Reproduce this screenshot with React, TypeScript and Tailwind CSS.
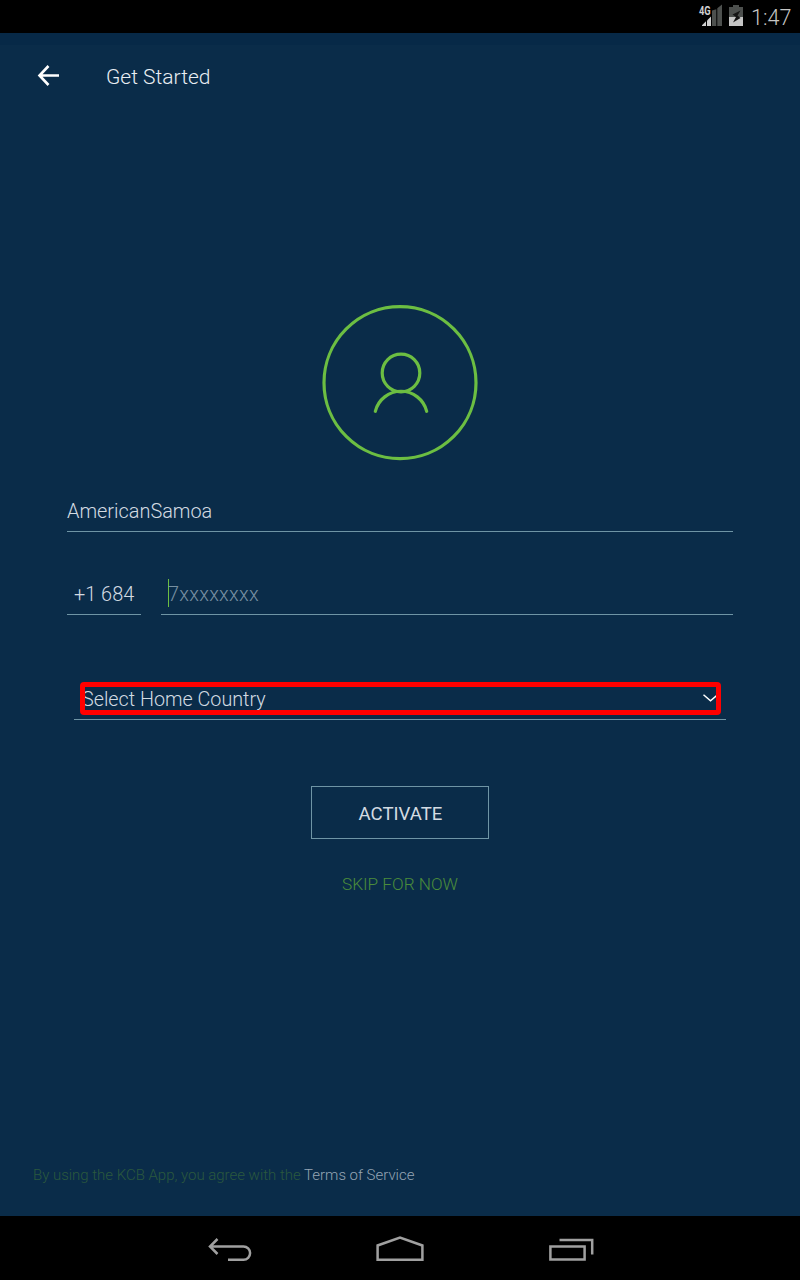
import React from "react";

function StatusBar() {
  return (
    <div className="flex h-[33px] w-full shrink-0 items-start bg-black">
      <svg width="48" height="33" viewBox="0 0 48 33" className="ml-[698px] shrink-0">
        <path d="M4 26V25.2L8 21.3V26Z" fill="#d0d0d0" />
        <path d="M9 20.5L13 16.5V26H9Z" fill="#d0d0d0" />
        <path d="M14 15V10.5L18.3 9.3V26H14Z M19.3 8.3L24 4.5V26H19.3Z" fill="#4d504e" />
        <text transform="translate(1 15) scale(0.88 1.18)" fontSize="10.6" fontWeight="700" fill="#cfcfcf" fontFamily="Roboto, sans-serif">4G</text>
        <path d="M31 7H35V5H41V7H45V17H31Z" fill="#4d504e" />
        <path d="M31 17H45V26H31Z" fill="#c6c6c6" />
        <path d="M42.5 10.5L34.5 14.5L38 17L35 22.5L42.5 18L39.5 15.5Z" fill="#151515" />
      </svg>
      <span className="ml-[5px] text-[21.6px] leading-[35px] text-[#c6c6c6]">1:47</span>
    </div>
  );
}

function Avatar() {
  return (
    <svg width="156" height="156" viewBox="0 0 156 156" className="shrink-0" fill="none" stroke="#6cbe42" strokeWidth="3.2">
      <circle cx="78" cy="77.7" r="76" strokeWidth="3.2" />
      <circle cx="79" cy="68" r="18.8" />
      <path d="M53.3 106.3A26.5 26.5 0 0 1 104.7 106.3" strokeLinecap="round" />
    </svg>
  );
}

function NavBar() {
  return (
    <div className="flex h-16 w-full shrink-0 bg-black">
      <svg width="800" height="64" viewBox="0 0 800 64" fill="none" stroke="#a0a0a0" strokeWidth="2.5">
        <path d="M210 30.5H243.5A6.6 6.6 0 0 1 243.5 43.7H228M217.5 23L210 30.5L217.5 38" />
        <path d="M377.6 43.7V29.5L400 21.6L422.4 29.5V43.7Z" />
        <path d="M550.4 30.4H584.6V43.6H550.4ZM559.5 24.1H592.2V38.5" />
      </svg>
    </div>
  );
}

export default function App() {
  return (
    <div className="flex h-[1280px] w-[800px] flex-col overflow-hidden bg-[#0a2c49] font-[Roboto,sans-serif] font-light whitespace-nowrap">
      <StatusBar />
      <div className="h-3 shrink-0 bg-[#072947]" />
      <header className="flex h-[62px] shrink-0 items-center pl-[37px]">
        <svg width="24" height="24" viewBox="0 0 24 24" fill="none" stroke="#ffffff" strokeWidth="2.6">
          <path d="M22 11.5H3M11.5 2L2.5 11.5L11.5 21" />
        </svg>
        <h1 className="mt-[2px] ml-[45px] text-[21px] leading-7 text-[#e9eef3]">Get Started</h1>
      </header>

      <main className="flex flex-1 flex-col items-center">
        <div className="mt-[198px] flex h-[156px]">
          <Avatar />
        </div>

        <div className="mt-[35px] flex h-[36px] w-[666px] border-b border-[#6f95a5] text-[19.9px] leading-[32px] text-[#d3dbe2]">
          AmericanSamoa
        </div>

        <div className="mt-[43px] flex h-10 w-[666px] gap-5 text-[19.9px] leading-[40px]">
          <div className="w-[74px] border-b border-[#6f95a5] pl-[7px] text-[#d3dbe2]">+1 684</div>
          <div className="flex flex-1 border-b border-[#6f95a5] pl-[7px] text-[#7890a2]">
            <span className="mt-[4px] h-7 w-px bg-[#6cbe42]" />
            <span className="-ml-px tracking-[0.27px]">7xxxxxxxx</span>
          </div>
        </div>

        <div className="mt-[67px] flex h-[38px] w-[652px] border-b border-[#6f95a5] pl-[6px]">
          <div className="relative h-[33px] w-[641px]">
            <div className="flex h-full items-center justify-between pr-[4px] pl-[2px] text-[19.75px] text-[#d3dbe2]">
              <span className="pt-[3px] leading-[34px]">Select Home Country</span>
              <svg width="14" height="9" viewBox="0 0 14 9" fill="none" stroke="#ffffff" strokeWidth="1.5">
                <path d="M0.5 0.8L7.5 6.8L14.5 0.8" />
              </svg>
            </div>
            <div className="absolute inset-0 rounded-[4px] border-[5px] border-[#ff0000]" />
          </div>
        </div>

        <button className="mt-[66px] flex h-[53px] w-[178px] items-center justify-center border border-[#6f95a5] pt-[2px] pl-px text-[18.6px] leading-6 font-normal text-[#d3dbe2]">
          ACTIVATE
        </button>
        <button className="mt-[33px] text-[17.2px] leading-[25px] text-[#4b8c3b]">SKIP FOR NOW</button>

        <p className="mt-auto mb-[31px] w-full pl-[33px] text-[14.97px] leading-5 text-[#2a593e]">
          By using the KCB App, you agree with the <span className="text-[#95a5b4]">Terms of Service</span>
        </p>
      </main>
      <NavBar />
    </div>
  );
}
